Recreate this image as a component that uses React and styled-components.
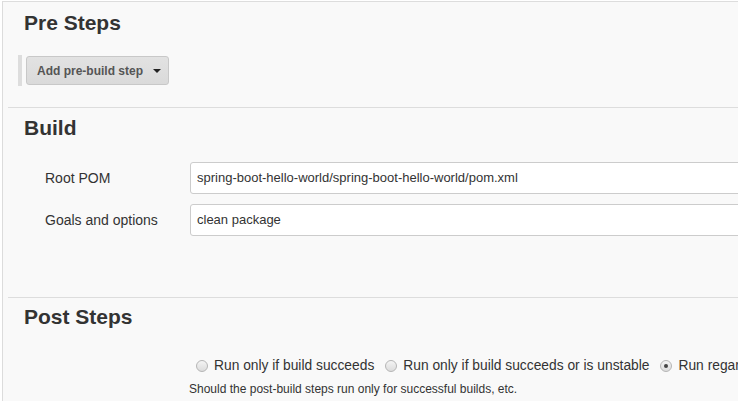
import React from 'react';
import styled, { createGlobalStyle } from 'styled-components';

const GlobalStyle = createGlobalStyle`
  html, body {
    margin: 0;
    padding: 0;
    background: #ffffff;
    overflow: hidden;
  }
  body {
    font-family: "Liberation Sans", Arial, sans-serif;
    color: #333333;
  }
`;

const Page = styled.div`
  box-sizing: border-box;
  margin: 1px 0 0 2px;
  height: calc(100vh - 1px);
  overflow: hidden;
  background: #f9f9f9;
  border-top: 1px solid #dddddd;
  border-left: 1px solid #dcdcdc;
`;

const Section = styled.section`
  margin-left: 5px;
  padding: ${p => p.$top}px 0 ${p => p.$bottom}px 16px;
  border-top: ${p => (p.$first ? 'none' : '1px solid #dddddd')};
`;

const Heading = styled.h2`
  margin: 0;
  font-size: 21px;
  line-height: 24px;
  font-weight: bold;
  color: #333333;
`;

const ButtonGroup = styled.div`
  margin-top: 20px;
  margin-left: -6px;
  display: flex;
  align-items: flex-start;
  border-left: 4px solid #dddddd;
  height: 31px;
`;

const DropButton = styled.button`
  display: flex;
  align-items: center;
  gap: 10px;
  height: 29px;
  margin: 1px 0 0 4px;
  padding: 0 7px 0 10px;
  background: linear-gradient(#e2e2e2, #dadada);
  border: 1px solid #c8c8c8;
  border-radius: 3px;
  font-family: "Liberation Sans", Arial, sans-serif;
  font-size: 12px;
  font-weight: bold;
  color: #555555;
`;

const Caret = styled.span`
  width: 0;
  height: 0;
  border-left: 4px solid transparent;
  border-right: 4px solid transparent;
  border-top: 4px solid #222222;
  margin-top: 1px;
`;

const Form = styled.div`
  margin-top: 22px;
  display: grid;
  grid-template-columns: 145px 1fr;
  row-gap: 10px;
  padding-left: 21px;
`;

const Label = styled.div`
  font-size: 14px;
  line-height: 32px;
  color: #333333;
`;

const Input = styled.div`
  box-sizing: border-box;
  width: 620px;
  height: 32px;
  padding: 0 6px;
  background: #ffffff;
  border: 1px solid #cccccc;
  border-radius: 3px;
  font-size: 13px;
  line-height: 30px;
  color: #333333;
  white-space: nowrap;
`;

const RadioRow = styled.div`
  margin-top: 28px;
  padding-left: 172px;
  display: flex;
  align-items: center;
  height: 16px;
  white-space: nowrap;
`;

const RadioItem = styled.label`
  display: flex;
  align-items: center;
  font-size: 13.8px;
  color: #333333;
  margin-right: 11px;
`;

const RadioDot = styled.span`
  box-sizing: border-box;
  width: 12px;
  height: 12px;
  margin: 2px 6px 0 0;
  border-radius: 50%;
  border: 1px solid #b5b5b5;
  background: linear-gradient(#f4f4f4, #dcdcdc);
  display: flex;
  align-items: center;
  justify-content: center;

  &::after {
    content: '';
    width: 4px;
    height: 4px;
    border-radius: 50%;
    background: ${p => (p.$checked ? '#444444' : 'transparent')};
  }
`;

const Help = styled.div`
  margin-top: 9px;
  padding-left: 165px;
  font-size: 12px;
  line-height: 14px;
  color: #333333;
  white-space: nowrap;
`;

const App = () => {
  return (
    <>
      <GlobalStyle />
      <Page>
        <Section $first $top={9} $bottom={21}>
          <Heading>Pre Steps</Heading>
          <ButtonGroup>
            <DropButton>
              Add pre-build step
              <Caret />
            </DropButton>
          </ButtonGroup>
        </Section>
        <Section $top={8} $bottom={61}>
          <Heading>Build</Heading>
          <Form>
            <Label>Root POM</Label>
            <Input>spring-boot-hello-world/spring-boot-hello-world/pom.xml</Input>
            <Label>Goals and options</Label>
            <Input>clean package</Input>
          </Form>
        </Section>
        <Section $top={7} $bottom={20}>
          <Heading>Post Steps</Heading>
          <RadioRow>
            <RadioItem><RadioDot />Run only if build succeeds</RadioItem>
            <RadioItem><RadioDot />Run only if build succeeds or is unstable</RadioItem>
            <RadioItem><RadioDot $checked />Run regardless of build result</RadioItem>
          </RadioRow>
          <Help>Should the post-build steps run only for successful builds, etc.</Help>
        </Section>
      </Page>
    </>
  );
};

export default App;
